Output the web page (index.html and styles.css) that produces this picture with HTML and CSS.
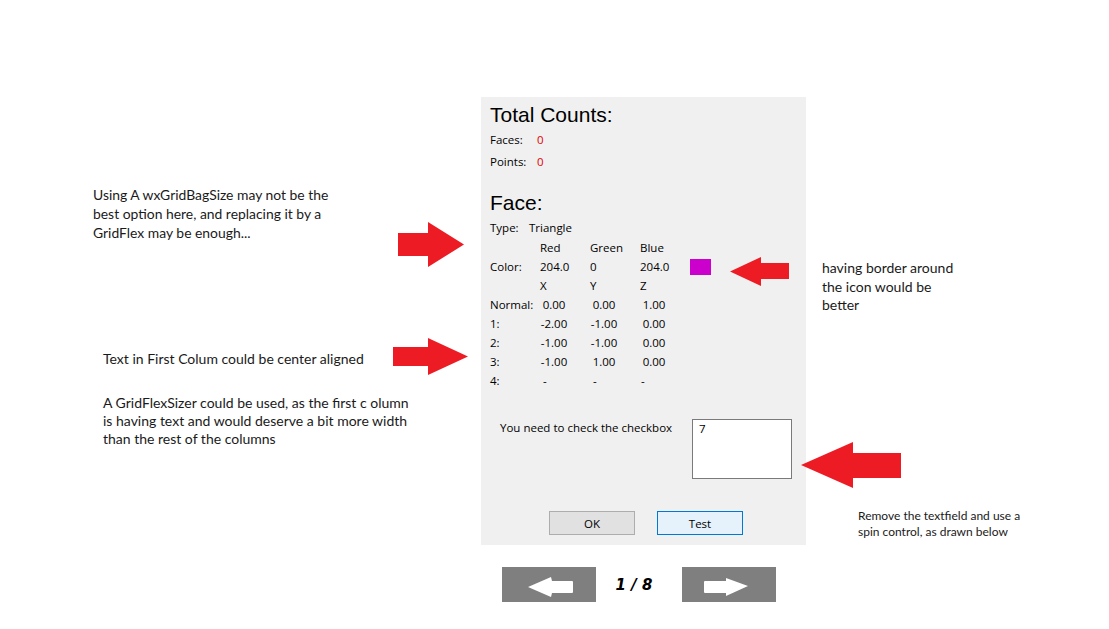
FILE: index.html
```html
<!DOCTYPE html>
<html>
<head>
<meta charset="utf-8">
<title>Face dialog review</title>
<link rel="stylesheet" href="styles.css">
</head>
<body>
<div class="slide">
  <p class="note note-gridbag">Using A wxGridBagSize may not be the<br>best option here, and replacing it by a<br>GridFlex may be enough...</p>
  <svg class="arrow arrow-a" width="66" height="45" viewBox="0 0 66 45"><polygon points="0,11 30,11 30,0 66,22.5 30,45 30,34 0,34"/></svg>

  <p class="note note-center">Text in First Colum could be center aligned</p>
  <svg class="arrow arrow-b" width="75" height="37" viewBox="0 0 75 37"><polygon points="0,9 35,9 35,0 75,18.5 35,37 35,28 0,28"/></svg>

  <p class="note note-flex">A GridFlexSizer could be used, as the first c olumn<br>is having text and would deserve a bit more width<br>than the rest of the columns</p>

  <svg class="arrow arrow-c" width="59" height="29" viewBox="0 0 59 29"><polygon points="0,14.5 31,0 31,6 59,6 59,22 31,22 31,29"/></svg>
  <p class="note note-border">having border around<br>the icon would be<br>better</p>

  <svg class="arrow arrow-d" width="100" height="46" viewBox="0 0 100 46"><polygon points="0,23 52,0 52,11 100,11 100,36 52,36 52,46"/></svg>
  <p class="note note-small">Remove the textfield and use a<br>spin control, as drawn below</p>

  <div class="dialog">
    <h2 class="dlg-title">Total Counts:</h2>
    <div class="counts">
      <span class="lbl">Faces:</span><span class="red">0</span>
      <span class="lbl">Points:</span><span class="red">0</span>
    </div>

    <h2 class="dlg-title face-title">Face:</h2>
    <div class="type-row"><span class="lbl">Type:</span><span>Triangle</span></div>

    <div class="face-grid">
      <span></span><span>Red</span><span>Green</span><span>Blue</span><span></span>
      <span>Color:</span><span>204.0</span><span>0</span><span>204.0</span><span class="swatch-cell"><span class="swatch"></span></span>
      <span></span><span>X</span><span>Y</span><span>Z</span><span></span>
      <span>Normal:</span><span class="num">0.00</span><span class="num">0.00</span><span class="num">1.00</span><span></span>
      <span>1:</span><span class="num">-2.00</span><span class="num">-1.00</span><span class="num">0.00</span><span></span>
      <span>2:</span><span class="num">-1.00</span><span class="num">-1.00</span><span class="num">0.00</span><span></span>
      <span>3:</span><span class="num">-1.00</span><span class="num">1.00</span><span class="num">0.00</span><span></span>
      <span>4:</span><span class="dash">-</span><span class="dash">-</span><span class="dash2">-</span><span></span>
    </div>

    <div class="check-row">
      <span class="check-label">You need to check the checkbox</span>
      <div class="textfield">7</div>
    </div>

    <div class="buttons">
      <button class="btn">OK</button>
      <button class="btn btn-focus">Test</button>
    </div>
  </div>

  <div class="pager">
    <div class="pager-btn"><svg width="94" height="35" viewBox="0 0 94 35"><path d="M26 20 L49 10 L50 14 L70 14 Q71 14 71 15 L71 25 Q71 26 70 26 L50 26 L49 30 Z" fill="#fff"/></svg></div>
    <span class="pager-text">1 / 8</span>
    <div class="pager-btn"><svg width="94" height="35" viewBox="0 0 94 35"><path d="M66 19 L44 11 L44 14 L23 14 Q22 14 22 15 L22 25 Q22 26 23 26 L44 26 L44 29 Z" fill="#fff"/></svg></div>
  </div>
</div>
</body>
</html>
```

FILE: styles.css
```css
* { box-sizing: border-box; }
html, body { margin: 0; padding: 0; background: #fff; }
.slide {
  position: relative;
  width: 1109px;
  height: 629px;
  overflow: hidden;
  background: #fff;
}

/* annotations on the slide canvas */
.note {
  position: absolute;
  margin: 0;
  font-family: Lato, "Open Sans", sans-serif;
  font-size: 14px;
  line-height: 19px;
  color: #1a1a1a;
  white-space: nowrap;
}
.note-gridbag { left: 93px; top: 185px; font-size: 13.9px; }
.note-center { left: 103px; top: 349px; }
.note-flex { left: 103px; top: 394px; line-height: 18px; }
.note-border { left: 822px; top: 259px; line-height: 18.5px; }
.note-small { left: 858px; top: 508px; font-size: 12px; line-height: 16px; }

.arrow { position: absolute; fill: #ed1c24; }
.arrow-a { left: 398px; top: 222px; }
.arrow-b { left: 393px; top: 338px; }
.arrow-c { left: 730px; top: 257px; z-index: 2; }
.arrow-d { left: 801px; top: 442px; z-index: 2; }

/* dialog window */
.dialog {
  position: absolute;
  left: 481px;
  top: 97px;
  width: 325px;
  height: 448px;
  background: #f0f0f0;
  padding: 6px 0 10px 9px;
  display: flex;
  flex-direction: column;
  font-family: "Open Sans", "Noto Sans", sans-serif;
  font-size: 11.5px;
  color: #000;
}
.dlg-title {
  margin: 0;
  font-family: "Liberation Sans", Arial, sans-serif;
  font-weight: normal;
  font-size: 21px;
  line-height: 24px;
}
.counts {
  display: grid;
  grid-template-columns: 47px auto;
  grid-auto-rows: 21.5px;
  align-items: center;
  margin-top: 2px;
}
.red { color: #e00000; }
.face-title { margin-top: 19px; }
.type-row {
  display: grid;
  grid-template-columns: 39px auto;
  height: 21px;
  align-items: center;
  margin-top: 2px;
}
.face-grid {
  display: grid;
  grid-template-columns: 50px 50px 50px 50px 30px;
  grid-auto-rows: 19px;
  align-items: center;
}
.face-grid .num { width: 28px; text-align: center; }
.face-grid .dash { padding-left: 3px; }
.face-grid .dash2 { padding-left: 1px; }
.swatch-cell { display: flex; align-items: center; }
.swatch {
  display: block;
  width: 21px;
  height: 16px;
  background: #cc00cc;
}

.check-row {
  display: flex;
  align-items: flex-start;
  margin-top: 29px;
  padding-left: 10px;
}
.check-label { width: 192px; padding-top: 1px; }
.textfield {
  width: 100px;
  height: 60px;
  background: #fff;
  border: 1px solid #7a7a7a;
  padding: 1px 6px;
}

.buttons {
  display: flex;
  gap: 22px;
  margin-top: auto;
  padding-left: 59px;
}
.btn {
  width: 86px;
  height: 24px;
  background: #e1e1e1;
  border: 1px solid #adadad;
  font-family: "Open Sans", "Noto Sans", sans-serif;
  font-size: 11.5px;
  color: #000;
  padding: 0;
}
.btn-focus { background: #e5f1fb; border-color: #0078d7; }

/* pager */
.pager {
  position: absolute;
  left: 502px;
  top: 567px;
  display: flex;
  align-items: center;
}
.pager-btn {
  width: 94px;
  height: 35px;
  background: #7f7f7f;
}
.pager-btn svg { display: block; }
.pager-text {
  width: 86px;
  padding-right: 10px;
  text-align: center;
  font-family: "DejaVu Sans", Verdana, sans-serif;
  font-weight: bold;
  font-style: italic;
  font-size: 15px;
  color: #000;
}
```
